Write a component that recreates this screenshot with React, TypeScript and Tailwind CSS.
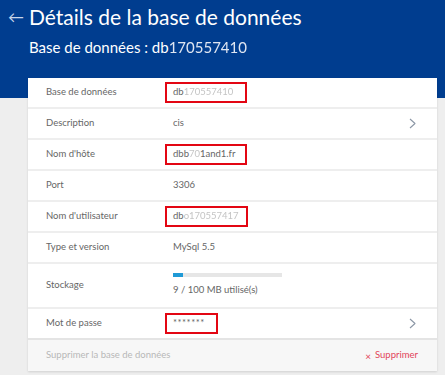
import type { ReactNode } from "react";

interface Row {
  label: string;
  value: ReactNode;
  boxed?: number;
  chevron?: boolean;
  height?: string;
}

function Masked({ head, tail }: { head: string; tail: string }) {
  return (
    <span>
      {head}
      <span className="text-[#c4c4c4] blur-[0.6px]">{tail}</span>
    </span>
  );
}

function Chevron() {
  return (
    <svg width="7" height="11" viewBox="0 0 7 11" fill="none" aria-hidden>
      <polyline points="1,1 6,5.5 1,10" stroke="#8c97a6" strokeWidth="1.1" strokeLinejoin="round" />
    </svg>
  );
}

const ROWS: Row[] = [
  { label: "Base de données", value: <Masked head="db" tail="170557410" />, boxed: 82 },
  { label: "Description", value: "cis", chevron: true },
  { label: "Nom d'hôte", value: <><Masked head="dbb" tail="70 " />1and1.fr</>, boxed: 82 },
  { label: "Port", value: "3306" },
  { label: "Nom d'utilisateur", value: <Masked head="db" tail="o170557417" />, boxed: 83 },
  { label: "Type et version", value: "MySql 5.5" },
  {
    label: "Stockage",
    height: "h-[45px]",
    value: (
      <div className="flex flex-col gap-[6px]">
        <div className="h-[4px] w-[109px] bg-[#e6e6e6]">
          <div className="h-full bg-[#1f9ad6]" style={{ width: "9%" }} />
        </div>
        <span>9 / 100 MB utilisé(s)</span>
      </div>
    ),
  },
  { label: "Mot de passe", value: <span className="tracking-[0.5px]">*******</span>, boxed: 53, chevron: true },
];

export default function App() {
  return (
    <div
      className="relative h-[375px] w-[445px] overflow-hidden bg-[#eeeeee] text-[9.5px] text-[#666666]"
      style={{ fontFamily: "Lato, 'Open Sans', sans-serif" }}
    >
      <header className="h-[98px] bg-[#003d8f] text-white">
        <div className="flex items-center pt-[3px]">
          <span className="w-[29px] pl-[8px] text-[16px] leading-[28px] text-[#c9d6ea]">←</span>
          <h1 className="text-[21px] leading-[28px]">Détails de la base de données</h1>
        </div>
        <p className="mt-[6px] pl-[29px] text-[15px] leading-[20px]">
          Base de données : db<span className="text-[#dfe6f2] blur-[0.7px]">170557410</span>
        </p>
      </header>

      <section className="-mt-[20px] ml-[28px] mr-[8px] bg-white shadow-[0_1px_2px_rgba(0,0,0,0.12)]">
        {ROWS.map((row, index) => (
          <div
            key={row.label}
            className={`flex items-center border-[#eeeeee] pl-[18px] pr-[21px] ${row.height ?? "h-[31px]"} ${
              index === ROWS.length - 1 ? "border-b-2 border-b-[#e4e4e4]" : "border-b-2"
            }`}
          >
            <span className="w-[119px] shrink-0">{row.label}</span>
            {row.boxed ? (
              <div
                className="flex h-[21px] items-center overflow-hidden whitespace-nowrap border-2 border-[#e30613] px-[6px]"
                style={{ width: row.boxed }}
              >
                {row.value}
              </div>
            ) : (
              <div className="pl-[8px]">{row.value}</div>
            )}
            <div className="flex-1" />
            {row.chevron && <Chevron />}
          </div>
        ))}
        <div className="flex h-[31px] items-center justify-between bg-[#f7f7f7] pl-[18px] pr-[19px]">
          <span className="text-[#b8b8b8]">Supprimer la base de données</span>
          <span className="flex items-center gap-[4px] text-[#e2455a]">
            <span className="text-[10px] leading-none">×</span>
            Supprimer
          </span>
        </div>
      </section>
    </div>
  );
}
